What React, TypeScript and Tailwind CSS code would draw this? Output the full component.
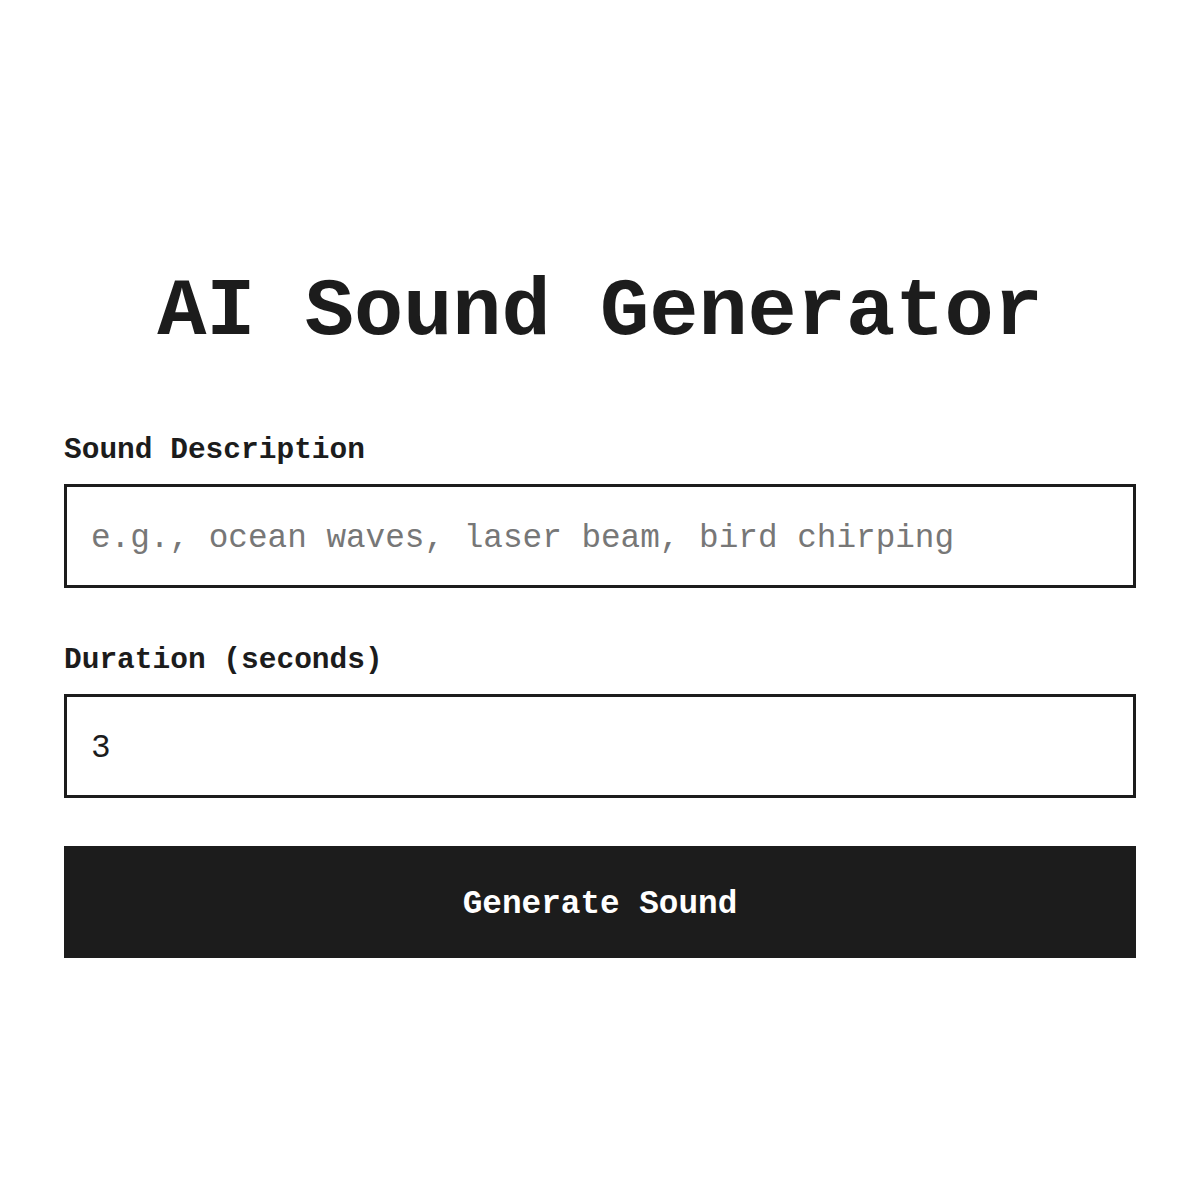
import { useState } from "react";

const mono = "font-['Liberation_Mono','DejaVu_Sans_Mono',monospace]";

export default function App() {
  const [description, setDescription] = useState("");
  const [duration, setDuration] = useState("3");

  return (
    <div className={`min-h-screen bg-white text-[#1c1c1c] ${mono}`}>
      <div className="px-16 pt-[265px]">
        <h1 className="text-center text-[82px] leading-[96px] font-bold">AI Sound Generator</h1>

        <form className="mt-[71px] flex flex-col" onSubmit={(e) => e.preventDefault()}>
          {/* Description */}
          <div className="flex flex-col gap-4">
            <label htmlFor="desc" className="text-[29.5px] leading-[36px] font-bold">
              Sound Description
            </label>
            <input
              id="desc"
              type="text"
              value={description}
              onChange={(e) => setDescription(e.target.value)}
              placeholder="e.g., ocean waves, laser beam, bird chirping"
              className="h-[104px] w-full border-[3px] border-[#1c1c1c] px-6 pt-1 text-[32.7px] text-[#1c1c1c] placeholder:text-[#777777] outline-none"
            />
          </div>

          {/* Duration */}
          <div className="mt-[54px] flex flex-col gap-4">
            <label htmlFor="dur" className="text-[29.5px] leading-[36px] font-bold">
              Duration (seconds)
            </label>
            <input
              id="dur"
              type="text"
              value={duration}
              onChange={(e) => setDuration(e.target.value)}
              className="h-[104px] w-full border-[3px] border-[#1c1c1c] px-6 pt-1 text-[32.7px] text-[#1c1c1c] outline-none"
            />
          </div>

          <button
            type="submit"
            className="mt-12 h-[112px] w-full bg-[#1c1c1c] pt-[6px] text-[32.7px] font-bold text-white"
          >
            Generate Sound
          </button>
        </form>
      </div>
    </div>
  );
}
